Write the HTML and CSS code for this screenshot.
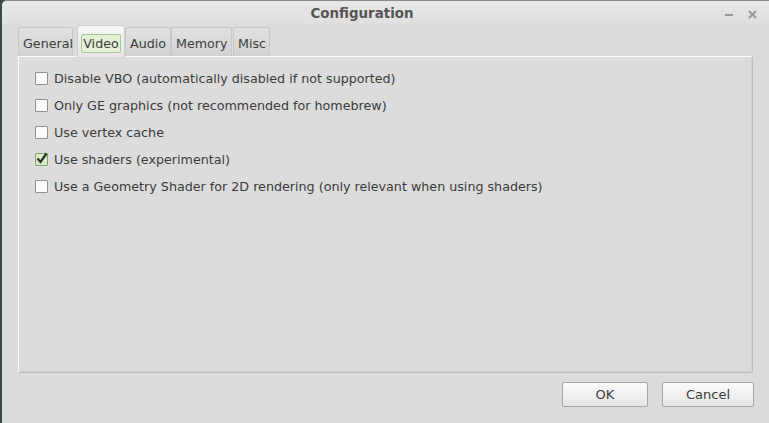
FILE: index.html
```html
<!DOCTYPE html>
<html>
<head>
<meta charset="utf-8">
<link rel="stylesheet" href="styles.css">
</head>
<body>
<div class="window">
  <div class="titlebar">
    <span class="title">Configuration</span>
    <div class="controls">
      <span class="min"></span>
      <svg class="close" width="9" height="9" viewBox="0 0 9 9"><path d="M1 1L8 8M8 1L1 8" stroke="#9a9a9a" stroke-width="2"/></svg>
    </div>
  </div>
  <div class="body">
    <div class="tabs">
      <div class="tab t-general">General</div>
      <div class="tab active t-video"><span class="focus">Video</span></div>
      <div class="tab t-audio">Audio</div>
      <div class="tab t-memory">Memory</div>
      <div class="tab t-misc">Misc</div>
    </div>
    <div class="panel">
      <label class="row"><span class="box"></span>Disable VBO (automatically disabled if not supported)</label>
      <label class="row"><span class="box"></span>Only GE graphics (not recommended for homebrew)</label>
      <label class="row"><span class="box"></span>Use vertex cache</label>
      <label class="row"><span class="box checked"><svg width="13" height="13" viewBox="0 0 13 13"><path d="M2.5 6.5L5.5 10L11.5 1.5" fill="none" stroke="#2e2e2e" stroke-width="2.2"/></svg></span>Use shaders (experimental)</label>
      <label class="row"><span class="box"></span>Use a Geometry Shader for 2D rendering (only relevant when using shaders)</label>
    </div>
    <div class="buttons">
      <button class="btn ok">OK</button>
      <button class="btn cancel">Cancel</button>
    </div>
  </div>
</div>
</body>
</html>
```
FILE: styles.css
```css
html, body {
  margin: 0;
  padding: 0;
  width: 769px;
  height: 423px;
  overflow: hidden;
  background: #3a4a4a;
}
.window {
  margin-left: 2px;
  width: 767px;
  height: 423px;
  background: #dcdcdc;
  border-top: 1px solid #8c8c8c;
  border-top-left-radius: 5px;
  box-sizing: border-box;
  font-family: "DejaVu Sans", sans-serif;
  font-size: 12px;
  color: #3c3c3c;
  display: flex;
  flex-direction: column;
}
.titlebar {
  height: 24px;
  flex: none;
  position: relative;
  display: flex;
  align-items: center;
  justify-content: center;
  background: linear-gradient(#e9e9e9, #dedede);
  border-top-left-radius: 5px;
}
.title {
  font-weight: bold;
  font-size: 13.4px;
  color: #555;
  margin-left: -47px;
}
.controls {
  position: absolute;
  right: 12px;
  top: 9px;
  display: flex;
  align-items: center;
  gap: 15px;
}
.min {
  width: 8px;
  height: 2px;
  background: #9a9a9a;
}
.body {
  flex: 1;
  padding: 0 16px 0 16px;
  display: flex;
  flex-direction: column;
}
.tabs {
  display: flex;
  align-items: flex-end;
  height: 31px;
  position: relative;
  z-index: 1;
}
.tab {
  height: 29px;
  box-sizing: border-box;
  padding: 2px 0 0 4px;
  border: 1px solid #c8c8c8;
  border-bottom: none;
  border-radius: 3px 3px 0 0;
  background: linear-gradient(#e2e2e2, #d2d2d2);
  display: flex;
  align-items: center;
  color: #3c3c3c;
  font-size: 12.7px;
}
.t-general { width: 55px; }
.t-video { width: 48px; margin-left: 4px; }
.t-audio { width: 46px; }
.t-memory { width: 61px; }
.t-misc { width: 37px; margin-left: 1px; }
.tab.active {
  height: 32px;
  background: linear-gradient(#f7f7f7, #e6e6e6);
  border-color: #cfcfcf;
  margin-bottom: -1px;
  padding: 3px 0 0 0;
  justify-content: center;
}
.focus {
  border: 1px solid #a8c690;
  background: #e4f0d8;
  border-radius: 2px;
  padding: 0 1px;
  line-height: 17px;
}
.panel {
  height: 317px;
  box-sizing: border-box;
  border: 1px solid #bcbcbc;
  border-left-color: #fafafa;
  border-top-color: #fafafa;
  border-radius: 0 2px 2px 2px;
  box-shadow: inset -1px -1px 0 #d0d0d0;
  padding: 15px 0 0 16px;
  display: flex;
  flex-direction: column;
  gap: 14px;
}
.row {
  display: flex;
  align-items: center;
  gap: 6px;
  height: 13px;
  font-size: 12.7px;
  color: #3a3a3a;
}
.box {
  width: 13px;
  height: 13px;
  box-sizing: border-box;
  border: 1px solid #8f8f8f;
  background: #fbfbfb;
  border-radius: 1px;
  flex: none;
  position: relative;
}
.box.checked {
  background: #d8e8c8;
  border-color: #86a070;
}
.box svg {
  position: absolute;
  left: -1px;
  top: -2px;
}
.buttons {
  display: flex;
  justify-content: flex-end;
  gap: 14px;
  margin-top: 9px;
  margin-right: -1px;
}
.btn {
  height: 25px;
  font-family: "DejaVu Sans", sans-serif;
  font-size: 13px;
  color: #3a3a3a;
  background: linear-gradient(#fbfbfb, #e6e6e6);
  border: 1px solid #a6a6a6;
  border-radius: 2px;
  padding: 0;
}
.ok { width: 86px; }
.cancel { width: 92px; }
```
